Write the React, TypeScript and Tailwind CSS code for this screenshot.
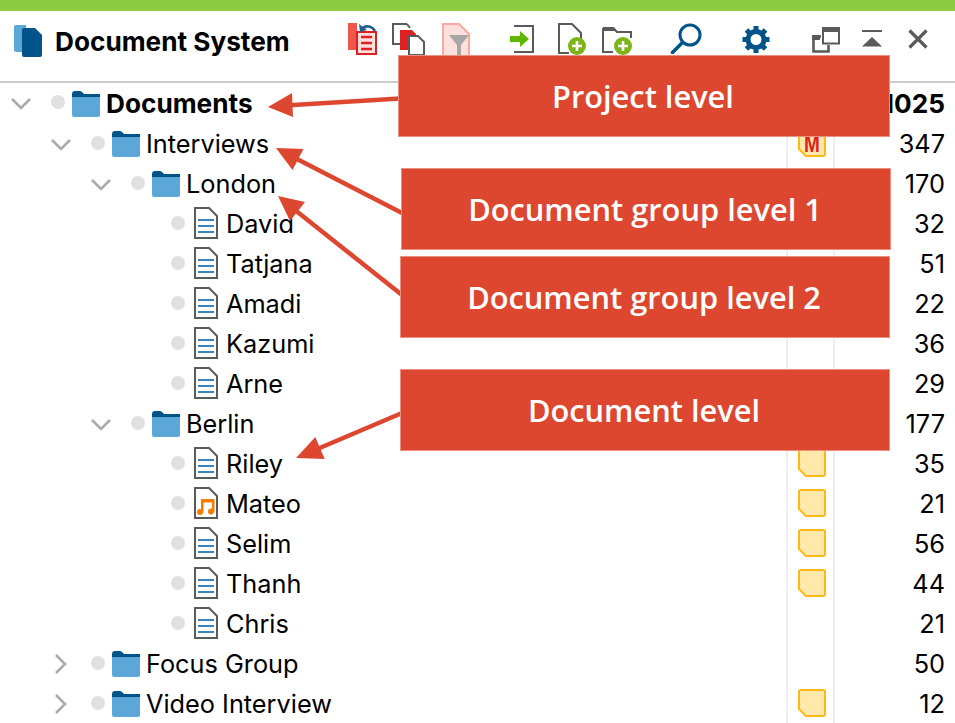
import React from "react";

const GRAY = "#5a5a5a";
const NAVY = "#00548a";
const SKY = "#5ba7d8";

function Chevron({ open }: { open: boolean }) {
  return open ? (
    <svg width="22" height="13" viewBox="0 0 22 13" className="ml-[10px]">
      <path d="M2 2l9 9 9-9" fill="none" stroke="#aaaaaa" strokeWidth="2.6" />
    </svg>
  ) : (
    <svg width="13" height="22" viewBox="0 0 13 22" className="ml-[14px]">
      <path d="M2 2l9 9-9 9" fill="none" stroke="#aaaaaa" strokeWidth="2.6" />
    </svg>
  );
}

function Folder() {
  return (
    <svg width="28" height="26" viewBox="0 0 28 26" className="ml-[7px] shrink-0">
      <path d="M0 3a3 3 0 0 1 3-3h5a3 3 0 0 1 2 1l2 2h16v5H0z" fill={NAVY} />
      <path d="M0 6h28v18a2 2 0 0 1-2 2H2a2 2 0 0 1-2-2z" fill={SKY} />
    </svg>
  );
}

function DocIcon({ music }: { music?: boolean }) {
  return (
    <svg width="24" height="32" viewBox="0 0 24 32" className="ml-[9px] shrink-0 -mt-[2px]">
      <path d="M1 1h14l8 8v22H1z" fill="#fff" stroke={GRAY} strokeWidth="2" />
      {music ? (
        <g fill="#f57c00">
          <circle cx="6" cy="25" r="3" />
          <circle cx="17" cy="24.5" r="3" />
          <path d="M7 12h13.5v13H18v-9.5H9.5V25H7z" />
        </g>
      ) : (
        <g fill="#3d85b8">
          <rect x="4" y="12" width="16" height="2" />
          <rect x="4" y="18" width="16" height="2" />
          <rect x="4" y="24" width="16" height="2" />
        </g>
      )}
    </svg>
  );
}

function Note({ memo }: { memo?: boolean }) {
  return (
    <div className="relative w-7 h-7 -mt-[2px]">
      <svg width="28" height="28" viewBox="0 0 28 28" className="absolute inset-0">
        <path d="M3 1h22a2 2 0 0 1 2 2v22a2 2 0 0 1-2 2H8l-7-7V3a2 2 0 0 1 2-2z" fill="#fee9ab" stroke="#fdb813" strokeWidth="2" />
      </svg>
      {memo && (
        <span className="absolute inset-0 flex items-center justify-center pt-[1px] text-[19px] leading-none font-bold scale-y-[1.3] text-[#e02020] font-['Liberation_Sans',sans-serif]">
          M
        </span>
      )}
    </div>
  );
}

type Row = {
  name: string;
  level: 0 | 1 | 2 | 3;
  kind: "folder" | "doc" | "music";
  chevron?: "open" | "closed";
  count: string;
  note?: "plain" | "memo";
  bold?: boolean;
};

const rows: Row[] = [
  { name: "Documents", level: 0, kind: "folder", chevron: "open", count: "1025", bold: true },
  { name: "Interviews", level: 1, kind: "folder", chevron: "open", count: "347", note: "memo" },
  { name: "London", level: 2, kind: "folder", chevron: "open", count: "170" },
  { name: "David", level: 3, kind: "doc", count: "32" },
  { name: "Tatjana", level: 3, kind: "doc", count: "51" },
  { name: "Amadi", level: 3, kind: "doc", count: "22" },
  { name: "Kazumi", level: 3, kind: "doc", count: "36" },
  { name: "Arne", level: 3, kind: "doc", count: "29" },
  { name: "Berlin", level: 2, kind: "folder", chevron: "open", count: "177" },
  { name: "Riley", level: 3, kind: "doc", count: "35", note: "plain" },
  { name: "Mateo", level: 3, kind: "music", count: "21", note: "plain" },
  { name: "Selim", level: 3, kind: "doc", count: "56", note: "plain" },
  { name: "Thanh", level: 3, kind: "doc", count: "44", note: "plain" },
  { name: "Chris", level: 3, kind: "doc", count: "21" },
  { name: "Focus Group", level: 1, kind: "folder", chevron: "closed", count: "50" },
  { name: "Video Interview", level: 1, kind: "folder", chevron: "closed", count: "12", note: "plain" },
];

const indent = ["w-0", "w-10", "w-20", "w-[120px]"];

function TreeRow({ r }: { r: Row }) {
  return (
    <div className="flex items-center h-10 shrink-0">
      <div className="flex items-center w-[786px] min-w-0">
        <div className={indent[r.level] + " shrink-0"} />
        <div className="w-[51px] shrink-0 flex items-center">{r.chevron && <Chevron open={r.chevron === "open"} />}</div>
        <div className="w-[14px] h-[14px] rounded-full bg-[#e0e0e0] shrink-0 -mt-[3px]" />
        {r.kind === "folder" ? <Folder /> : <DocIcon music={r.kind === "music"} />}
        <span className={(r.kind === "folder" ? "ml-[6px] " : "ml-[8px] ") + (r.bold ? "font-bold text-[26.2px] " : "") + "whitespace-nowrap"}>
          {r.name}
        </span>
      </div>
      <div className="w-[49px] h-10 border-x-2 border-[#eeeeee] shrink-0 flex items-center pl-[10px]">
        {r.note && <Note memo={r.note === "memo"} />}
      </div>
      <div className={(r.bold ? "font-bold text-[26.2px] " : "") + "flex-1 text-right pr-[10px]"}>{r.count}</div>
    </div>
  );
}

function Plus({ cx, cy }: { cx: number; cy: number }) {
  return (
    <g>
      <circle cx={cx} cy={cy} r="9" fill="#7cb518" />
      <path d={`M${cx - 5} ${cy}h10M${cx} ${cy - 5}v10`} stroke="#fff" strokeWidth="2.6" />
    </g>
  );
}

function HeaderIcons() {
  return (
    <>
      <svg width="30" height="32" viewBox="0 0 30 32" className="ml-0 mt-[12px] shrink-0">
        <rect x="0" y="0" width="9" height="27" fill="#f0564a" />
        <path d="M9 9h19v22H9z" fill="#fde0de" stroke="#e02020" strokeWidth="2" />
        <path d="M13 14h11M13 20h11M13 26h11" stroke="#e02020" strokeWidth="2.4" />
        <path d="M14 7c2-5 9-5 13 1" fill="none" stroke="#1f5f8f" strokeWidth="2.6" />
        <path d="M11 1l1 8 7-2z" fill="#1f5f8f" />
      </svg>
      <svg width="33" height="32" viewBox="0 0 33 32" className="ml-[14px] mt-[12px] shrink-0">
        <path d="M15 1H1v20h7" fill="none" stroke={GRAY} strokeWidth="2" />
        <path d="M15 1l3 4" fill="none" stroke={GRAY} strokeWidth="2" />
        <path d="M8 7h12l4 4v16H8z" fill="#e02020" />
        <path d="M17 13h9l6 6v13H17z" fill="#fff" stroke={GRAY} strokeWidth="2" />
      </svg>
      <svg width="28" height="32" viewBox="0 0 28 32" className="ml-[17px] mt-[12px] shrink-0">
        <path d="M1 1h16l10 10v22H1z" fill="#fde0dc" stroke="#f8a9a0" strokeWidth="2" />
        <path d="M7 12h20l-8 10v10h-4V22z" fill="#a6a6a6" />
      </svg>
      <svg width="24" height="28" viewBox="0 0 24 28" className="ml-[40px] mt-[14px] shrink-0">
        <path d="M4 1h19v26H4" fill="none" stroke={GRAY} strokeWidth="2" />
        <path d="M0 11h10V6l9 8-9 8v-5H0z" fill="#5fb800" />
      </svg>
      <svg width="28" height="32" viewBox="0 0 28 32" className="ml-[24px] mt-[12px] shrink-0">
        <path d="M1 31V1h13l9 9v8" fill="none" stroke={GRAY} strokeWidth="2" />
        <path d="M1 30h10" stroke={GRAY} strokeWidth="2" />
        <Plus cx={19} cy={23} />
      </svg>
      <svg width="30" height="28" viewBox="0 0 30 28" className="ml-[16px] mt-[16px] shrink-0">
        <path d="M1 26V2h11l3 3h14v6" fill="none" stroke={GRAY} strokeWidth="2" />
        <path d="M1 0h11l3 4H1z" fill={GRAY} />
        <path d="M1 25h10" stroke={GRAY} strokeWidth="2" />
        <Plus cx={21} cy={19} />
      </svg>
      <svg width="32" height="31" viewBox="0 0 32 31" className="ml-[38px] mt-[12px] shrink-0">
        <circle cx="20" cy="12" r="10" fill="none" stroke={NAVY} strokeWidth="3" />
        <path d="M12.5 19.5L2.5 29.5" stroke={NAVY} strokeWidth="3.6" strokeLinecap="round" />
      </svg>
      <svg width="28" height="27" viewBox="0 0 28 27" className="ml-[40px] mt-[15px] shrink-0">
        <circle cx="14" cy="13.5" r="8" fill="none" stroke={NAVY} strokeWidth="5" />
        {[0, 45, 90, 135, 180, 225, 270, 315].map((a) => (
          <rect key={a} x="11.5" y="0" width="5" height="5" fill={NAVY} transform={`rotate(${a} 14 13.5)`} />
        ))}
      </svg>
      <svg width="28" height="26" viewBox="0 0 28 26" className="ml-[42px] mt-[16px] shrink-0">
        <path d="M9 9.5H1.5v15h15V18" fill="none" stroke={GRAY} strokeWidth="2.6" />
        <rect x="0" y="8" width="8" height="5" fill={GRAY} />
        <rect x="11" y="1" width="16" height="15.5" fill="#fff" stroke={GRAY} strokeWidth="2" />
        <rect x="10" y="0" width="18" height="5" fill={GRAY} />
      </svg>
      <svg width="20" height="17" viewBox="0 0 20 17" className="ml-[22px] mt-[19px] shrink-0">
        <rect x="0" y="0" width="20" height="2" fill={GRAY} />
        <path d="M0 16.5L10 7l10 9.5z" fill={GRAY} />
      </svg>
      <svg width="20" height="20" viewBox="0 0 20 20" className="ml-[26px] mt-[18px] shrink-0">
        <path d="M1.5 1.5l17 17M18.5 1.5l-17 17" stroke={GRAY} strokeWidth="3.2" />
      </svg>
    </>
  );
}

function Callout({ className, children }: { className: string; children: React.ReactNode }) {
  return (
    <div
      className={
        "absolute h-[82px] flex items-center justify-center pr-[2px] bg-[#dd4730] border border-[#eb8f80] text-white font-semibold text-[30.8px] font-['Open_Sans',sans-serif] " +
        className
      }
    >
      {children}
    </div>
  );
}

function Arrows() {
  const c = "#dd4730";
  return (
    <svg width="955" height="723" viewBox="0 0 955 723" className="absolute inset-0 pointer-events-none">
      <g stroke={c} strokeWidth="4.5">
        <path d="M285 105.5L400 98.5" />
        <path d="M295 158L402 213" />
        <path d="M295 210L402 295" />
        <path d="M315 450L402 413" />
      </g>
      <g fill={c}>
        <path d="M268 107L292 93L293 117z" />
        <path d="M276 148L292.5 170L303.5 149z" />
        <path d="M278 196L290 221L305 202z" />
        <path d="M296 458L324.7 459L315.3 437z" />
      </g>
    </svg>
  );
}

export default function App() {
  return (
    <div className="relative w-[955px] h-[723px] overflow-hidden bg-white text-black text-[25.3px] font-['Inter','Liberation_Sans',sans-serif]">
      <div className="h-[11px] bg-[#8ccb41]" />
      <div className="h-[72px] flex items-start border-b-2 border-[#cccccc]">
        <svg width="28" height="32" viewBox="0 0 28 32" className="ml-[14px] mt-[14px] shrink-0">
          <path d="M2 0h10v27H2a2 2 0 0 1-2-2V2a2 2 0 0 1 2-2z" fill={SKY} />
          <path d="M10 3h11l7 7v20a2 2 0 0 1-2 2H10a2 2 0 0 1-2-2V5a2 2 0 0 1 2-2z" fill={NAVY} />
        </svg>
        <div className="ml-[13px] w-[293px] shrink-0 mt-[14px] font-bold text-[26.2px] leading-[34px] whitespace-nowrap">Document System</div>
        <HeaderIcons />
      </div>
      <div className="pt-px flex flex-col">
        {rows.map((r) => (
          <TreeRow key={r.name} r={r} />
        ))}
      </div>
      <Arrows />
      <Callout className="left-[398px] top-[55px] w-[492px]">Project level</Callout>
      <Callout className="left-[401px] top-[168px] w-[490px]">Document group level 1</Callout>
      <Callout className="left-[400px] top-[256px] w-[490px]">Document group level 2</Callout>
      <Callout className="left-[400px] top-[369px] w-[490px]">Document level</Callout>
    </div>
  );
}
